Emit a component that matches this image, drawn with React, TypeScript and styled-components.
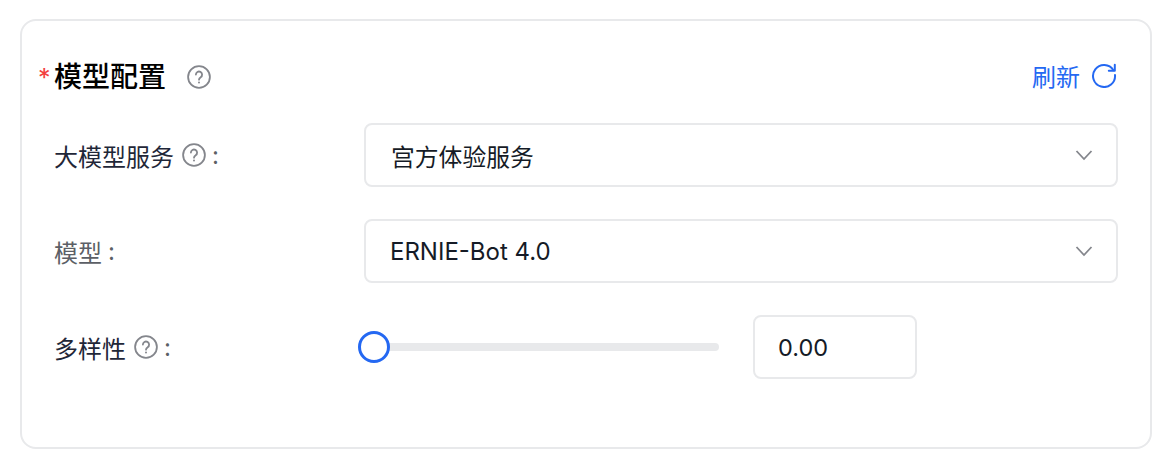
import React from 'react';

import styled, { createGlobalStyle } from 'styled-components';

const FONT = `Inter, "Noto Sans CJK SC", sans-serif`;

const GlobalStyle = createGlobalStyle`
    html, body {
        margin: 0;
        padding: 0;
        background: #fff;
        font-family: ${FONT};
    }
`;

const HelpIcon = ({ size = 24 }: { size?: number }) => (
    <svg width={size} height={size} viewBox="0 0 24 24" fill="none" stroke="#84868c" strokeWidth="1.8">
        <circle cx="12" cy="12" r="10.9" />
        <path d="M8.9 9.6a3.1 3.1 0 1 1 4.8 2.6c-1 .7-1.7 1.2-1.7 2.5" strokeLinecap="round" />
        <circle cx="12" cy="17.6" r="1" fill="#84868c" stroke="none" />
    </svg>
);

const RefreshIcon = () => (
    <svg width="26" height="26" viewBox="0 0 26 26" fill="none" stroke="#2468f2" strokeWidth="2">
        <path d="M22.4 8.2A11 11 0 1 0 24 13" strokeLinecap="round" />
        <path d="M23.8 2.8v6h-6" strokeLinejoin="round" strokeLinecap="round" />
    </svg>
);

const ChevronIcon = () => (
    <svg width="18" height="12" viewBox="0 0 18 12" fill="none" stroke="#84868c" strokeWidth="1.8">
        <path d="M1.5 2l7.5 8 7.5-8" />
    </svg>
);

const SelectField = ({ value, latin }: { value: string; latin?: boolean }) => (
    <Select $latin={latin}>
        <span>{value}</span>
        <ChevronIcon />
    </Select>
);

const App = () => (
    <Page>
        <GlobalStyle />
        <Card>
            <Header>
                <TitleGroup>
                    <Required>*</Required>
                    <Title>模型配置</Title>
                    <HelpIcon />
                </TitleGroup>
                <RefreshButton>
                    刷新
                    <RefreshIcon />
                </RefreshButton>
            </Header>
            <Row>
                <Label>
                    大模型服务
                    <HelpIcon />
                    <Colon>:</Colon>
                </Label>
                <SelectField value="宫方体验服务" />
            </Row>
            <Row>
                <Label $muted>
                    模型
                    <Colon>:</Colon>
                </Label>
                <SelectField value="ERNIE-Bot 4.0" latin />
            </Row>
            <Row>
                <Label>
                    多样性
                    <HelpIcon />
                    <Colon>:</Colon>
                </Label>
                <SliderGroup>
                    <Track>
                        <Thumb />
                    </Track>
                    <NumberInput>0.00</NumberInput>
                </SliderGroup>
            </Row>
        </Card>
    </Page>
);

const Page = styled.div`
    width: 1174px;
    height: 470px;
    box-sizing: border-box;
    padding: 19px 22px 21px 20px;
    overflow: hidden;
`;
const Card = styled.div`
    box-sizing: border-box;
    height: 430px;
    padding: 32px 32px 0 32px;
    border: 2px solid #e8e9eb;
    border-radius: 16px;
    background: #fff;
    display: flex;
    flex-direction: column;
    gap: 32px;
`;
const Header = styled.div`
    height: 48px;
    margin-bottom: -10px;
    display: flex;
    align-items: center;
    justify-content: space-between;
`;
const TitleGroup = styled.div`
    display: flex;
    align-items: center;
    gap: 21px;
    position: relative;
`;
const Required = styled.span`
    position: absolute;
    left: -16px;
    top: 5px;
    color: #f33e3e;
    font-size: 25px;
    line-height: 40px;
`;
const Title = styled.h2`
    margin: 0;
    font-size: 28px;
    line-height: 48px;
    font-weight: 500;
    color: #000;
`;
const RefreshButton = styled.div`
    display: flex;
    align-items: center;
    gap: 11px;
    margin-top: -4px;
    padding-right: 1px;
    font-size: 24px;
    color: #2468f2;
`;
const Row = styled.div`
    display: grid;
    grid-template-columns: 310px 1fr;
    align-items: center;
`;
const Label = styled.label<{ $muted?: boolean }>`
    display: flex;
    align-items: center;
    gap: 8px;
    font-size: 24px;
    color: ${({ $muted }) => ($muted ? '#5c5f66' : '#1f2738')};
`;
const Colon = styled.span`
    margin-left: -2px;
    color: #5c5f66;
`;
const Select = styled.div<{ $latin?: boolean }>`
    box-sizing: border-box;
    height: 64px;
    padding: 0 23px 0 ${({ $latin }) => ($latin ? '24px' : '25px')};
    display: flex;
    align-items: center;
    justify-content: space-between;
    border: 2px solid #e8e9eb;
    border-radius: 8px;
    font-size: ${({ $latin }) => ($latin ? '24px' : '23.8px')};
    color: #151b26;
`;
const SliderGroup = styled.div`
    display: flex;
    align-items: center;
    gap: 34px;
`;
const Track = styled.div`
    position: relative;
    width: 355px;
    height: 8px;
    border-radius: 4px;
    background: #e8e9eb;
`;
const Thumb = styled.span`
    position: absolute;
    left: -6px;
    top: -12px;
    box-sizing: border-box;
    width: 32px;
    height: 32px;
    border: 3px solid #2468f2;
    border-radius: 50%;
    background: #fff;
`;
const NumberInput = styled.div`
    box-sizing: border-box;
    width: 164px;
    height: 64px;
    padding-left: 23px;
    display: flex;
    align-items: center;
    border: 2px solid #e8e9eb;
    border-radius: 8px;
    font-size: 23.5px;
    color: #151b26;
`;

export default App;
